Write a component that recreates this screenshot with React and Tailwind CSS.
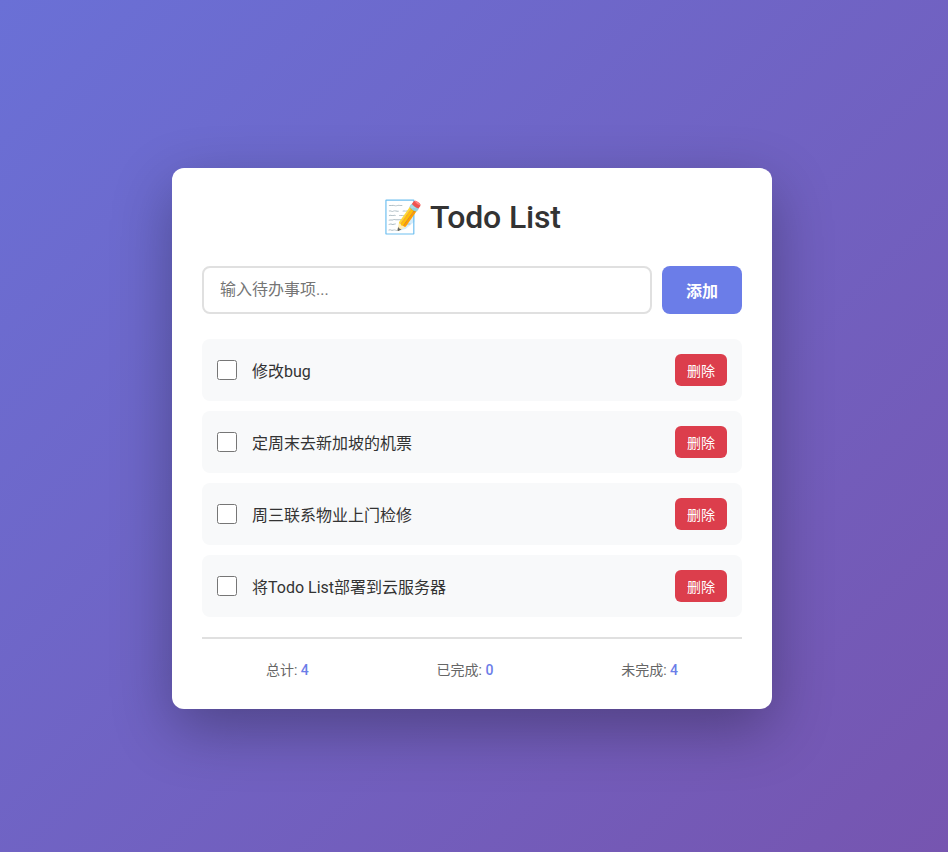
import React, { useState } from "react";

const initialTodos = [
  { id: 1, text: "修改bug", done: false },
  { id: 2, text: "定周末去新加坡的机票", done: false },
  { id: 3, text: "周三联系物业上门检修", done: false },
  { id: 4, text: "将Todo List部署到云服务器", done: false },
];

const App = () => {
  const [todos, setTodos] = useState(initialTodos);
  const [text, setText] = useState("");

  const addTodo = () => {
    if (!text.trim()) return;
    setTodos((prev) => [...prev, { id: Date.now(), text: text.trim(), done: false }]);
    setText("");
  };

  const doneCount = todos.filter((t) => t.done).length;

  return (
    <div className="min-h-screen flex items-center justify-center pt-[25px] pr-1 bg-[linear-gradient(135deg,#6a70d6_0%,#7655b0_100%)] font-['Roboto','Noto_Sans_CJK_SC',sans-serif]">
      <div className="w-full max-w-[600px] bg-white rounded-xl p-[30px] shadow-[0_20px_60px_rgba(0,0,0,0.3)]">
        <h1 className="text-center text-[32px] font-medium tracking-[-0.15px] leading-[38px] text-[#333] mb-[30px]">📝 Todo List</h1>

        {/* input row */}
        <div className="flex gap-2.5 mb-[25px]">
          <input
            type="text"
            placeholder="输入待办事项..."
            className="flex-1 min-w-0 h-12 px-4 pb-0.5 border-2 border-[#e0e0e0] rounded-lg text-base outline-none placeholder:text-[#757575]"
            value={text}
            onChange={(e) => setText(e.target.value)}
          />
          <button onClick={addTodo} className="w-20 h-12 pt-1 bg-[#6b7de8] text-white text-base font-semibold rounded-lg">
            添加
          </button>
        </div>

        {/* list */}
        <div className="flex flex-col gap-2.5">
          {todos.map((todo) => (
            <div key={todo.id} className="flex items-center h-[62px] px-[15px] bg-[#f8f9fa] rounded-lg">
              <input
                type="checkbox"
                checked={todo.done}
                onChange={() =>
                  setTodos((prev) => prev.map((t) => (t.id === todo.id ? { ...t, done: !t.done } : t)))
                }
                className="w-5 h-5 mr-[15px]"
              />
              <span className="flex-1 pt-1 text-base text-[#333]">{todo.text}</span>
              <button
                onClick={() => setTodos((prev) => prev.filter((t) => t.id !== todo.id))}
                className="w-[52px] h-8 pt-0.5 bg-[#dc3e4c] text-white text-sm rounded-md"
              >
                删除
              </button>
            </div>
          ))}
        </div>

        {/* stats */}
        <div className="flex justify-around mt-5 pt-[21px] -mb-px border-t-2 border-[#e0e0e0] text-sm leading-5 text-[#666]">
          <span>总计: <strong className="font-medium text-[#6b7de8]">{todos.length}</strong></span>
          <span>已完成: <strong className="font-medium text-[#6b7de8]">{doneCount}</strong></span>
          <span>未完成: <strong className="font-medium text-[#6b7de8]">{todos.length - doneCount}</strong></span>
        </div>
      </div>
    </div>
  );
};

export default App;
